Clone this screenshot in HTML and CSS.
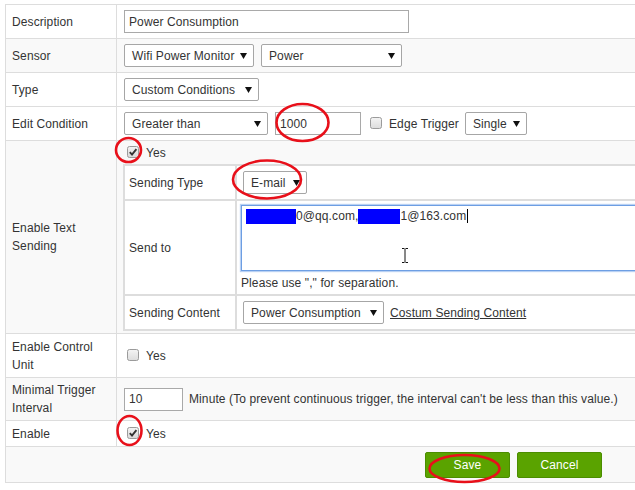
FILE: index.html
```html
<!DOCTYPE html>
<html>
<head>
<meta charset="utf-8">
<link rel="stylesheet" href="styles.css">
</head>
<body>
<div class="form">
  <div class="row r34">
    <div class="label">Description</div>
    <div class="value"><div class="input w285">Power Consumption</div></div>
  </div>
  <div class="row r34 alt">
    <div class="label">Sensor</div>
    <div class="value gap7">
      <div class="select w130"><span>Wifi Power Monitor</span><svg class="arr" width="7" height="6" viewBox="0 0 7 6"><path d="M0 0H7L3.5 6Z"/></svg></div>
      <div class="select w141"><span>Power</span><svg class="arr" width="7" height="6" viewBox="0 0 7 6"><path d="M0 0H7L3.5 6Z"/></svg></div>
    </div>
  </div>
  <div class="row r34">
    <div class="label">Type</div>
    <div class="value">
      <div class="select w135"><span>Custom Conditions</span><svg class="arr" width="7" height="6" viewBox="0 0 7 6"><path d="M0 0H7L3.5 6Z"/></svg></div>
    </div>
  </div>
  <div class="row r34">
    <div class="label">Edit Condition</div>
    <div class="value">
      <div class="select w144"><span>Greater than</span><svg class="arr" width="7" height="6" viewBox="0 0 7 6"><path d="M0 0H7L3.5 6Z"/></svg></div>
      <div class="input w86 ml7">1000</div>
      <span class="cb ml9"><svg width="13" height="13" viewBox="0 0 13 13"><defs><linearGradient id="g1" x1="0" y1="0" x2="0" y2="1"><stop offset="0" stop-color="#f4f4f4"/><stop offset="1" stop-color="#dcdcdc"/></linearGradient></defs><rect x="0.5" y="0.5" width="11" height="11" rx="2" fill="url(#g1)" stroke="#9b9b9b"/></svg></span>
      <span class="cbtext">Edge Trigger</span>
      <div class="select w62 ml6"><span>Single</span><svg class="arr" width="7" height="6" viewBox="0 0 7 6"><path d="M0 0H7L3.5 6Z"/></svg></div>
    </div>
  </div>
  <div class="row r193 alt">
    <div class="label">Enable Text Sending</div>
    <div class="value col">
      <div class="yesrow">
        <span class="cb"><svg width="13" height="13" viewBox="0 0 13 13"><defs><linearGradient id="g2" x1="0" y1="0" x2="0" y2="1"><stop offset="0" stop-color="#f4f4f4"/><stop offset="1" stop-color="#d8d8d8"/></linearGradient></defs><rect x="0.5" y="0.5" width="11" height="11" rx="2" fill="url(#g2)" stroke="#9b9b9b"/><path d="M2.8 6.2 L5 8.6 L9.4 3.2" stroke="#333" stroke-width="1.9" fill="none"/></svg></span>
        <span class="cbtext">Yes</span>
      </div>
      <div class="inner">
        <div class="irow ir33">
          <div class="ilabel">Sending Type</div>
          <div class="ivalue">
            <div class="select w64 ml2"><span>E-mail</span><svg class="arr" width="7" height="6" viewBox="0 0 7 6"><path d="M0 0H7L3.5 6Z"/></svg></div>
          </div>
        </div>
        <div class="irow ir95">
          <div class="ilabel">Send to</div>
          <div class="ivalue top">
            <div class="textarea"><span class="redact r1"></span>0@qq.com,<span class="redact r2"></span>1@163.com<span class="caret"></span></div>
            <div class="hint">Please use "," for separation.</div>
          </div>
        </div>
        <div class="irow ir33 last">
          <div class="ilabel">Sending Content</div>
          <div class="ivalue">
            <div class="select w141 ml2"><span>Power Consumption</span><svg class="arr" width="7" height="6" viewBox="0 0 7 6"><path d="M0 0H7L3.5 6Z"/></svg></div>
            <a class="link">Costum Sending Content</a>
          </div>
        </div>
      </div>
    </div>
  </div>
  <div class="row r44">
    <div class="label">Enable Control Unit</div>
    <div class="value">
      <span class="cb"><svg width="13" height="13" viewBox="0 0 13 13"><defs><linearGradient id="g3" x1="0" y1="0" x2="0" y2="1"><stop offset="0" stop-color="#f4f4f4"/><stop offset="1" stop-color="#dcdcdc"/></linearGradient></defs><rect x="0.5" y="0.5" width="11" height="11" rx="2" fill="url(#g3)" stroke="#9b9b9b"/></svg></span>
      <span class="cbtext">Yes</span>
    </div>
  </div>
  <div class="row r43 alt">
    <div class="label">Minimal Trigger Interval</div>
    <div class="value">
      <div class="input w59">10</div>
      <span class="note">Minute (To prevent continuous trigger, the interval can't be less than this value.)</span>
    </div>
  </div>
  <div class="row r26">
    <div class="label">Enable</div>
    <div class="value">
      <span class="cb"><svg width="13" height="13" viewBox="0 0 13 13"><defs><linearGradient id="g4" x1="0" y1="0" x2="0" y2="1"><stop offset="0" stop-color="#f4f4f4"/><stop offset="1" stop-color="#d8d8d8"/></linearGradient></defs><rect x="0.5" y="0.5" width="11" height="11" rx="2" fill="url(#g4)" stroke="#9b9b9b"/><path d="M2.8 6.2 L5 8.6 L9.4 3.2" stroke="#333" stroke-width="1.9" fill="none"/></svg></span>
      <span class="cbtext">Yes</span>
    </div>
  </div>
  <div class="row r36 alt buttons">
    <div class="btn">Save</div>
    <div class="btn">Cancel</div>
  </div>
</div>
<svg class="overlay" width="635" height="490" viewBox="0 0 635 490">
  <g fill="none" stroke="#e8101a" stroke-width="2.6">
    <ellipse cx="302.5" cy="122.5" rx="26" ry="18.5"/>
    <ellipse cx="128.5" cy="150" rx="12.5" ry="12"/>
    <ellipse cx="267" cy="179.5" rx="34" ry="19"/>
    <ellipse cx="129.5" cy="430.5" rx="12" ry="14.5"/>
    <ellipse cx="464.5" cy="468.5" rx="35" ry="13.5"/>
  </g>
  <path d="M402 248.5h2.5M408 248.5h-2.5M405 249v13M402 262.5h2.5M408 262.5h-2.5" stroke="#111" stroke-width="1" fill="none"/>
</svg>
</body>
</html>
```
FILE: styles.css
```css
* { box-sizing: border-box; }
html, body { margin: 0; padding: 0; background: #fff; overflow: hidden; }
body {
  font-family: "Liberation Sans", Arial, sans-serif;
  font-size: 12px;
  letter-spacing: 0.1px;
  color: #333;
  width: 635px;
  height: 490px;
  position: relative;
}
.form {
  margin: 4px 0 0 5px;
  width: 630px;
  border-top: 1px solid #ddd;
  border-left: 1px solid #ddd;
}
.row { display: flex; border-bottom: 1px solid #ddd; }
.row.alt { background: #f9f9f9; }
.r34 { height: 34px; }
.r193 { height: 193px; }
.r44 { height: 44px; }
.r43 { height: 43px; }
.r26 { height: 26px; }
.r36 { height: 36px; }
.label {
  width: 111px;
  flex: none;
  border-right: 1px solid #ddd;
  padding: 0 4px 0 6px;
  display: flex;
  align-items: center;
  line-height: 18px;
}
.value {
  flex: 1;
  min-width: 0;
  padding-left: 7px;
  display: flex;
  align-items: center;
  white-space: nowrap;
  overflow: hidden;
}
.value.col {
  flex-direction: column;
  align-items: stretch;
  padding-left: 6px;
}
.gap7 { gap: 7px; }
.ml2 { margin-left: 2px; }
.ml6 { margin-left: 6px; }
.ml7 { margin-left: 7px; }
.ml9 { margin-left: 9px; }
.input {
  height: 23px;
  border: 1px solid #a9a9a9;
  background: #fff;
  padding: 0 4px;
  display: flex;
  align-items: center;
  flex: none;
}
.w285 { width: 285px; }
.w86 { width: 86px; }
.w59 { width: 59px; }
.select {
  height: 23px;
  border: 1px solid #a6a6a6;
  border-radius: 2px;
  background: #fff;
  padding: 0 6px 0 7px;
  display: flex;
  align-items: center;
  justify-content: space-between;
  flex: none;
}
.select .arr { fill: #111; flex: none; }
.w130 { width: 130px; }
.w141 { width: 141px; }
.w135 { width: 135px; }
.w144 { width: 144px; }
.w62 { width: 62px; }
.w64 { width: 64px; }
.cb { width: 13px; height: 13px; display: inline-flex; flex: none; }
.value > .cb:first-child { margin-left: 3px; }
.cbtext { margin-left: 6px; }
.yesrow {
  height: 23px;
  display: flex;
  align-items: center;
  padding-left: 4px;
}
.inner {
  border: 2px solid #ddd;
  border-right: none;
  background: #fff;
}
.irow { display: flex; border-bottom: 2px solid #ddd; }
.irow.last { border-bottom: none; }
.ir33 { height: 35px; }
.irow.last.ir33 { height: 33px; }
.ir95 { height: 95px; }
.ilabel {
  width: 112px;
  flex: none;
  border-right: 2px solid #ddd;
  padding-left: 4px;
  display: flex;
  align-items: center;
}
.ivalue {
  flex: 1;
  min-width: 0;
  padding-left: 4px;
  display: flex;
  align-items: center;
  white-space: nowrap;
}
.ivalue.top {
  flex-direction: column;
  align-items: stretch;
  padding-top: 4px;
}
.textarea {
  height: 66px;
  border: 1px solid #6d9ee3;
  border-right: none;
  box-shadow: 0 0 1px 1px #b9d1f3;
  background: #fff;
  padding: 3px 0 0 4px;
  line-height: 15px;
}
.redact {
  display: inline-block;
  height: 15px;
  background: #0000ff;
  vertical-align: top;
}
.r1 { width: 50px; }
.r2 { width: 42px; }
.caret {
  display: inline-block;
  width: 1px;
  height: 14px;
  background: #000;
  vertical-align: top;
  margin-left: 1px;
}
.hint { margin-top: 5px; line-height: 14px; }
.link { color: #333; text-decoration: underline; margin-left: 6px; }
.note { margin-left: 6px; }
.buttons {
  padding-left: 419px;
  align-items: center;
  gap: 7px;
}
.btn {
  width: 85px;
  height: 26px;
  background: #5aa300;
  border: 1px solid #4b8d00;
  border-radius: 2px;
  color: #fff;
  display: flex;
  align-items: center;
  justify-content: center;
  margin-top: 1px;
}
.overlay { position: absolute; left: 0; top: 0; pointer-events: none; }
```
